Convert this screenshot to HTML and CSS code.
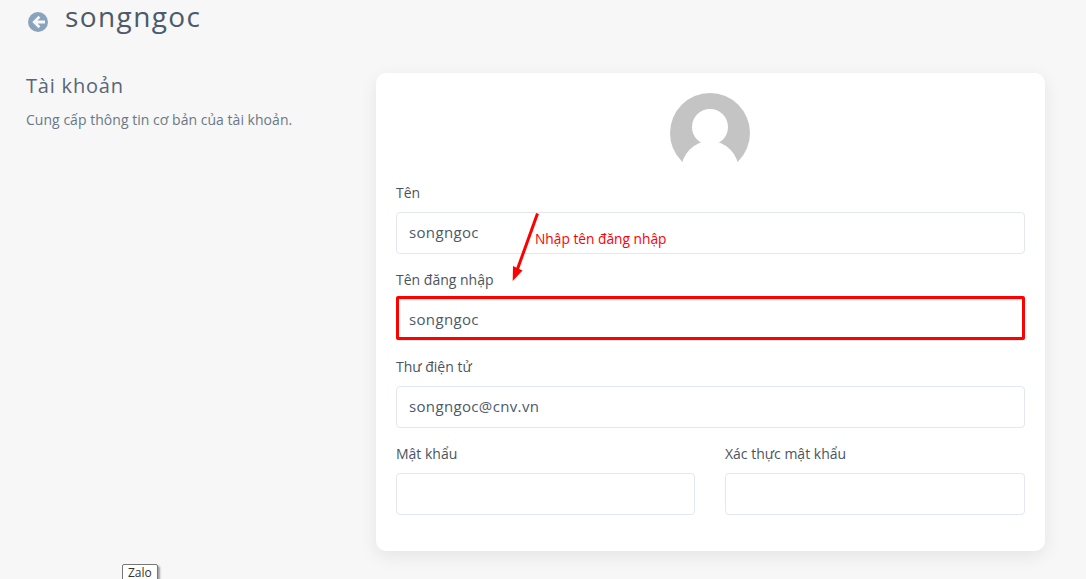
FILE: index.html
```html
<!DOCTYPE html>
<html lang="vi">
<head>
<meta charset="utf-8">
<title>songngoc</title>
<link rel="stylesheet" href="styles.css">
</head>
<body>
<header class="page-head">
  <svg class="back" viewBox="0 0 20 20" width="20" height="20"><circle cx="10" cy="10" r="10" fill="#8aa3bd"/><path d="M10.5 3.8 4.3 10l6.2 6.2 1.9-1.9-2.9-2.9H17V8.6H9.5l2.9-2.9z" fill="#f7f7f7"/></svg>
  <h1 class="title">songngoc</h1>
</header>
<main class="layout">
  <aside class="intro">
    <h2 class="intro-title">Tài khoản</h2>
    <p class="intro-text">Cung cấp thông tin cơ bản của tài khoản.</p>
  </aside>
  <section class="card">
    <div class="avatar-row">
      <svg class="avatar" viewBox="0 0 80 80" width="80" height="80">
        <circle cx="40" cy="40" r="40" fill="#c4c4c4"/>
        <circle cx="40" cy="34" r="18" fill="#fff"/>
        <ellipse cx="40" cy="78" rx="29" ry="30" fill="#fff"/>
      </svg>
    </div>
    <div class="field"><label class="label">Tên</label><div class="input">songngoc</div></div>
    <div class="field"><label class="label">Tên đăng nhập</label><div class="input">songngoc<span class="highlight"></span></div></div>
    <div class="field"><label class="label">Thư điện tử</label><div class="input">songngoc@cnv.vn</div></div>
    <div class="field-row">
      <div class="field"><label class="label">Mật khẩu</label><div class="input"></div></div>
      <div class="field"><label class="label">Xác thực mật khẩu</label><div class="input"></div></div>
    </div>
    <svg class="arrow" viewBox="0 0 40 80" width="40" height="80"><path d="M31.5 1.5 11.5 57" stroke="#f00" stroke-width="3" fill="none"/><path d="M6.7 69 7 54 16.5 58.5z" fill="#f00"/></svg>
    <span class="note">Nhập tên đăng nhập</span>
  </section>
</main>
<div class="tip">Zalo</div>
</body>
</html>
```
FILE: styles.css
```css
* { box-sizing: border-box; }
body {
  margin: 0;
  height: 579px;
  overflow: hidden;
  background: #f7f7f7;
  font-family: "Open Sans", "Noto Sans", sans-serif;
  position: relative;
}
.page-head {
  display: flex;
  align-items: flex-start;
  height: 38px;
  padding-left: 28px;
  gap: 17px;
}
.back { margin-top: 12px; }
.title {
  margin: 1px 0 0;
  font-size: 28px;
  font-weight: 400;
  line-height: 31px;
  color: #4c5a69;
  letter-spacing: 1.4px;
}
.layout {
  display: flex;
  margin-top: 35px;
  padding-left: 26px;
}
.intro { width: 350px; }
.intro-title {
  margin: 0;
  font-size: 20px;
  font-weight: 400;
  line-height: 26px;
  letter-spacing: 0.8px;
  color: #5a6675;
}
.intro-text {
  margin: 12px 0 0;
  font-size: 14px;
  line-height: 18px;
  letter-spacing: 0.03px;
  color: #6b7785;
}
.card {
  position: relative;
  display: flex;
  flex-direction: column;
  gap: 16px;
  width: 669px;
  height: 478px;
  padding: 20px;
  background: #fff;
  border-radius: 10px;
  box-shadow: 0 5px 18px rgba(0,0,0,.08);
}
.avatar-row {
  display: flex;
  justify-content: center;
  padding-right: 2px;
  margin-bottom: -6px;
}
.avatar { display: block; }
.label {
  display: block;
  margin-bottom: 9px;
  font-size: 14px;
  line-height: 20px;
  color: #4a5460;
}
.input {
  position: relative;
  height: 42px;
  padding: 0 12px;
  background: #fff;
  border: 1px solid #e3e7ef;
  border-radius: 4px;
  font-size: 15px;
  letter-spacing: 0.35px;
  line-height: 38px;
  color: #4c5a69;
}
.field-row {
  display: grid;
  grid-template-columns: 299px 300px;
  column-gap: 30px;
}
.highlight {
  position: absolute;
  inset: -4px -1px 0;
  border: 3px solid #f00;
  border-radius: 2px;
}
.arrow { position: absolute; left: 130px; top: 139px; }
.note {
  position: absolute;
  left: 159px;
  top: 157px;
  font-size: 13.75px;
  line-height: 18px;
  color: #f00;
}
.tip {
  position: absolute;
  left: 122px;
  top: 564px;
  width: 36px;
  height: 18px;
  padding-left: 5px;
  background: #fff;
  border: 1px solid #777;
  border-radius: 2px;
  box-shadow: 2px 2px 2px rgba(0,0,0,.35);
  font-family: "Open Sans", sans-serif;
  font-size: 12px;
  line-height: 15px;
  color: #333;
}
```
